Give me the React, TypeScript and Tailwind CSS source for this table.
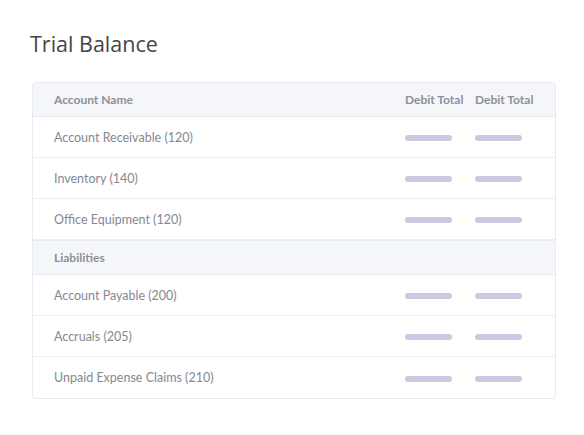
import React from "react";

const Bar = () => <div className="h-[6px] w-[47px] rounded-full bg-[#c9cae2]" />;

const Row = ({ name, last }: { name: string; last?: boolean }) => (
  <div className={`flex h-[41px] items-center pt-[2px] ${last ? "" : "border-b border-[#eceef3]"}`}>
    <div className="flex-1 pl-[21px] text-[12.5px] text-[#858891]">{name}</div>
    <div className="flex w-[70px]"><Bar /></div>
    <div className="flex w-[80px]"><Bar /></div>
  </div>
);

const Head = ({ label, totals }: { label: string; totals?: boolean }) => (
  <div className="flex h-[34px] items-center border-b border-[#e7eaf0] bg-[#f5f6fa] text-[12px] font-bold text-[#8e9098]">
    <div className="flex-1 pl-[21px]">{label}</div>
    {totals && (
      <>
        <div className="w-[70px]">Debit Total</div>
        <div className="w-[80px]">Debit Total</div>
      </>
    )}
  </div>
);

export default function App() {
  return (
    <div className="h-[435px] w-[584px] bg-white pl-[32px] pt-[28px]" style={{ fontFamily: "Lato, 'Open Sans', sans-serif" }}>
      <h1 className="ml-[-2px] text-[21.5px] leading-[32px] text-[#454545]" style={{ fontFamily: "'Open Sans', sans-serif" }}>
        Trial Balance
      </h1>
      <div className="mt-[22px] w-[524px] overflow-hidden rounded-[4px] border border-[#e7eaf0]">
        <Head label="Account Name" totals />
        <Row name="Account Receivable (120)" />
        <Row name="Inventory (140)" />
        <Row name="Office Equipment (120)" />
        <div className="border-t border-[#e7eaf0]" />
        <Head label="Liabilities" />
        <Row name="Account Payable (200)" />
        <Row name="Accruals (205)" />
        <Row name="Unpaid Expense Claims (210)" last />
      </div>
    </div>
  );
}
